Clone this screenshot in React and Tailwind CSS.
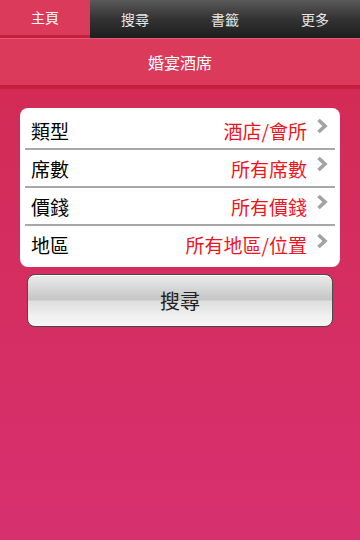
const tabs = ["主頁", "搜尋", "書籤", "更多"];

const rows = [
  { label: "類型", value: "酒店/會所" },
  { label: "席數", value: "所有席數" },
  { label: "價錢", value: "所有價錢" },
  { label: "地區", value: "所有地區/位置" },
];

function Chevron() {
  return (
    <svg viewBox="0 0 12 16" className="ml-[9px] h-[16px] w-[12px] -translate-y-[4px]">
      <polyline points="2.5,2 9,8 2.5,14" fill="none" stroke="#a3a3a3" strokeWidth="3.6" strokeLinejoin="miter" />
    </svg>
  );
}

export default function App() {
  return (
    <div
      className="flex h-[540px] w-[360px] flex-col overflow-hidden bg-gradient-to-b from-[#d22a50] to-[#d7306f] text-black"
      style={{ fontFamily: '"Noto Sans CJK TC", "Noto Sans", sans-serif' }}
    >
      {/* tab bar */}
      <div className="flex h-[38px] bg-gradient-to-b from-[#5a5a5a] via-[#333] to-[#1e1e1e]">
        {tabs.map((tab, i) => (
          <div
            key={tab}
            className={
              i === 0
                ? "flex w-[90px] items-center justify-center border-b-[3px] border-[#c4203c] bg-[#dc3a5a] text-[14px] text-white"
                : "flex w-[90px] items-center justify-center text-[14px] text-[#e6e6e6]"
            }
          >
            {tab}
          </div>
        ))}
      </div>

      {/* title */}
      <div className="flex h-[51px] items-center justify-center border-b-[4px] border-t border-[#c61f3d] border-t-[#e8587a] bg-[#dc3a5a] text-[16px] text-white">
        婚宴酒席
      </div>

      <div className="px-5 pt-[19px]">
        <div className="rounded-lg bg-white px-[5px] py-1">
          {rows.map((row, i) => (
            <div
              key={row.label}
              className={
                i < rows.length - 1
                  ? "flex h-[38px] items-center border-b-2 border-[#a8a8a8] pl-[6px] pr-[7px]"
                  : "flex h-[37px] items-center pl-[6px] pr-[7px]"
              }
            >
              <span className="text-[19px] leading-none">{row.label}</span>
              <span className="ml-auto text-[19px] leading-none text-[#f0141e]">{row.value}</span>
              <Chevron />
            </div>
          ))}
        </div>

        <button className="mx-[7px] mt-[7px] flex h-[53px] w-[306px] items-center justify-center rounded-lg border border-[#4a4a4a] bg-[linear-gradient(to_bottom,#ececec_0%,#d4d4d4_30%,#c6c6c6_48%,#dedede_52%,#f0f0f0_80%,#f6f6f6_100%)] text-[20px] text-[#222] shadow-[inset_0_1px_0_#fff]">
          搜尋
        </button>
      </div>
    </div>
  );
}
